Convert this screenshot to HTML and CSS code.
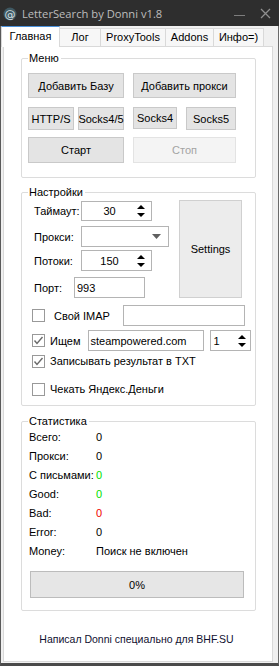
FILE: index.html
```html
<!DOCTYPE html>
<html lang="ru">
<head>
    <meta charset="UTF-8">
    <title>LetterSearch by Donni v1.8</title>
    <link rel="stylesheet" href="styles.css">
</head>
<body>
<div class="window">
    <!-- Заголовок окна -->
    <div class="titlebar">
        <svg class="app-icon" width="14" height="14" viewBox="0 0 14 14">
            <circle cx="7" cy="7" r="6.5" fill="#3f5862"/>
            <text x="7" y="10.5" text-anchor="middle" font-size="11" font-family="DejaVu Sans, sans-serif" fill="#d8e2e6">@</text>
        </svg>
        <span class="app-title">LetterSearch by Donni v1.8</span>
        <div class="win-buttons">
            <svg width="11" height="11" viewBox="0 0 11 11"><line x1="0" y1="7.5" x2="11" y2="7.5" stroke="#7d7d7d" stroke-width="1"/></svg>
            <svg width="11" height="11" viewBox="0 0 11 11"><path d="M1 1 L10 10 M10 1 L1 10" stroke="#8f8f8f" stroke-width="1.3"/></svg>
        </div>
    </div>

    <div class="client">
        <!-- Вкладки -->
        <div class="tabs">
            <div class="tab active" style="width:59px">Главная</div>
            <div class="tab" style="width:42px">Лог</div>
            <div class="tab" style="width:66px">ProxyTools</div>
            <div class="tab" style="width:49px">Addons</div>
            <div class="tab" style="width:51px">Инфо=)</div>
        </div>

        <div class="panel">
            <!-- Меню -->
            <div class="group group-menu">
                <div class="group-title">Меню</div>
                <div class="btn-row row-1">
                    <div class="btn btn-wide">Добавить Базу</div>
                    <div class="btn btn-wider">Добавить прокси</div>
                </div>
                <div class="btn-row row-2">
                    <div class="btn btn-http">HTTP/S</div>
                    <div class="btn btn-s45">Socks4/5</div>
                    <div class="btn btn-s4">Socks4</div>
                    <div class="btn btn-s5">Socks5</div>
                </div>
                <div class="btn-row row-3">
                    <div class="btn btn-wide">Старт</div>
                    <div class="btn btn-wider disabled">Стоп</div>
                </div>
            </div>

            <!-- Настройки -->
            <div class="group group-settings">
                <div class="group-title">Настройки</div>
                <div class="settings-top">
                    <div class="settings-fields">
                        <div class="field-row fr-timeout">
                            <span class="field-label">Таймаут:</span>
                            <div class="spin">
                                <span class="spin-value">30</span>
                                <svg class="spin-arrows" width="8" height="14" viewBox="0 0 8 14"><polygon points="0,5 4,1 8,5" fill="#000"/><polygon points="0,9 8,9 4,13" fill="#000"/></svg>
                            </div>
                        </div>
                        <div class="field-row fr-proxy">
                            <span class="field-label">Прокси:</span>
                            <div class="combo">
                                <svg width="9" height="5" viewBox="0 0 9 5"><polygon points="0,0 9,0 4.5,5" fill="#606060"/></svg>
                            </div>
                        </div>
                        <div class="field-row fr-threads">
                            <span class="field-label">Потоки:</span>
                            <div class="spin">
                                <span class="spin-value">150</span>
                                <svg class="spin-arrows" width="8" height="14" viewBox="0 0 8 14"><polygon points="0,5 4,1 8,5" fill="#000"/><polygon points="0,9 8,9 4,13" fill="#000"/></svg>
                            </div>
                        </div>
                        <div class="field-row fr-port">
                            <span class="field-label port-label">Порт:</span>
                            <div class="textbox port-box">993</div>
                        </div>
                    </div>
                    <div class="btn btn-settings">Settings</div>
                </div>

                <div class="check-row cr-imap">
                    <span class="checkbox"></span>
                    <span class="check-label imap-label">Свой IMAP</span>
                    <div class="textbox imap-box"></div>
                </div>
                <div class="check-row cr-search">
                    <span class="checkbox checked">
                        <svg width="11" height="11" viewBox="0 0 11 11"><polyline points="1.5,5.5 4,8.5 9.5,2" fill="none" stroke="#6a6a6a" stroke-width="1.4"/></svg>
                    </span>
                    <span class="check-label">Ищем</span>
                    <div class="textbox search-box">steampowered.com</div>
                    <div class="spin spin-small">
                        <span class="spin-value left">1</span>
                        <svg class="spin-arrows" width="8" height="14" viewBox="0 0 8 14"><polygon points="0,5 4,1 8,5" fill="#000"/><polygon points="0,9 8,9 4,13" fill="#000"/></svg>
                    </div>
                </div>
                <div class="check-row cr-txt">
                    <span class="checkbox checked">
                        <svg width="11" height="11" viewBox="0 0 11 11"><polyline points="1.5,5.5 4,8.5 9.5,2" fill="none" stroke="#6a6a6a" stroke-width="1.4"/></svg>
                    </span>
                    <span class="check-label">Записывать результат в TXT</span>
                </div>
                <div class="check-row cr-yandex">
                    <span class="checkbox"></span>
                    <span class="check-label">Чекать Яндекс.Деньги</span>
                </div>
            </div>

            <!-- Статистика -->
            <div class="group group-stats">
                <div class="group-title">Статистика</div>
                <div class="stat-row"><span class="stat-label">Всего:</span><span>0</span></div>
                <div class="stat-row"><span class="stat-label">Прокси:</span><span>0</span></div>
                <div class="stat-row"><span class="stat-label">С письмами:</span><span class="green">0</span></div>
                <div class="stat-row"><span class="stat-label">Good:</span><span class="green">0</span></div>
                <div class="stat-row"><span class="stat-label">Bad:</span><span class="red">0</span></div>
                <div class="stat-row"><span class="stat-label">Error:</span><span>0</span></div>
                <div class="stat-row"><span class="stat-label">Money:</span><span>Поиск не включен</span></div>
                <div class="progress">0%</div>
            </div>

            <div class="footer">Написал Donni специально для BHF.SU</div>
        </div>
    </div>
</div>
</body>
</html>
```

FILE: styles.css
```css
body {
    margin: 0;
    font-family: "Liberation Sans", Arial, sans-serif;
    font-size: 11px;
    color: #000;
}

.window {
    width: 279px;
    height: 666px;
    background-color: #f0f0f0;
    display: flex;
    flex-direction: column;
    overflow: hidden;
}

/* Заголовок */
.titlebar {
    height: 26px;
    flex-shrink: 0;
    background-color: #2e2e2e;
    display: flex;
    align-items: center;
    padding-left: 3px;
}

.app-icon {
    margin-top: 1px;
}

.app-title {
    margin-left: 5px;
    font-family: "Open Sans", "Noto Sans", sans-serif;
    font-size: 11.2px;
    color: #bdbdbd;
}

.win-buttons {
    margin-left: auto;
    display: flex;
    gap: 15px;
    padding-right: 8px;
    margin-top: 1px;
}

/* Клиентская область */
.client {
    flex: 1;
    border-left: 1px solid #5a5a5a;
    border-right: 1px solid #6a6a6a;
    border-bottom: 3px solid #4a4a4a;
}

.tabs {
    height: 20px;
    display: flex;
    align-items: flex-end;
}

.tab {
    box-sizing: border-box;
    height: 18px;
    line-height: 16px;
    text-align: center;
    background-color: #f7f7f7;
    border: 1px solid #d9d9d9;
    border-bottom: none;
    margin-left: -1px;
}

.tab.active {
    margin-left: 0;
    height: 21px;
    line-height: 19px;
    align-self: flex-start;
    margin-bottom: -1px;
    background-color: #fff;
    border-top-color: #4a90d9;
    position: relative;
    z-index: 1;
}

.panel {
    box-sizing: border-box;
    margin-left: 2px;
    width: 270px;
    height: 616px;
    background-color: #fff;
    border: 1px solid #d9d9d9;
    padding-top: 11px;
    padding-left: 17px;
}

/* Групбоксы */
.group {
    box-sizing: border-box;
    width: 235px;
    border: 1px solid #dcdcdc;
    border-radius: 2px;
}

.group-title {
    width: fit-content;
    height: 14px;
    line-height: 14px;
    margin: -8px 0 0 6px;
    padding: 0 2px 0 1px;
    background-color: #fff;
}

/* Кнопки */
.btn {
    box-sizing: border-box;
    background-color: #e4e4e4;
    border: 1px solid #c9c9c9;
    display: flex;
    align-items: center;
    justify-content: center;
}

.btn.disabled {
    background-color: #f4f4f4;
    border-color: #e3e3e3;
    color: #a3a3a3;
}

.group-menu {
    padding-bottom: 14px;
}

.btn-row {
    display: flex;
    align-items: flex-start;
    margin-left: 6px;
}

.row-1 { margin-top: 8px; height: 25px; gap: 9px; }
.row-2 { margin-top: 9px; height: 23px; }
.row-3 { margin-top: 7px; height: 26px; gap: 9px; }

.row-1 .btn, .row-3 .btn { height: 100%; }
.btn-wide { width: 96px; }
.btn-wider { width: 103px; }

.row-2 .btn { height: 23px; }
.btn-http { width: 46px; }
.btn-s45 { width: 46px; margin-left: 4px; }
.row-2 .btn-s4 { width: 44px; height: 22px; margin-left: 9px; }
.btn-s5 { width: 50px; margin-left: 9px; }

/* Настройки */
.group-settings {
    margin-top: 14px;
    padding-bottom: 9px;
}

.settings-top {
    display: flex;
    align-items: flex-start;
}

.settings-fields {
    width: 157px;
    padding-left: 12px;
    box-sizing: border-box;
}

.field-row {
    display: flex;
    align-items: center;
    height: 20px;
}

.fr-timeout { margin-top: 2px; }
.fr-proxy { margin-top: 5px; height: 21px; }
.fr-threads { margin-top: 3px; height: 21px; }
.fr-port { margin-top: 6px; height: 21px; }

.field-label {
    width: 47px;
}

.port-label {
    width: 40px;
}

.spin, .combo, .textbox {
    box-sizing: border-box;
    height: 100%;
    border: 1px solid #b4b4b4;
    background-color: #fff;
    display: flex;
    align-items: center;
}

.spin {
    width: 71px;
}

.spin-value {
    flex: 1;
    text-align: center;
}

.spin-value.left {
    text-align: left;
    padding-left: 3px;
}

.spin-arrows {
    margin-right: 6px;
}

.combo {
    width: 88px;
    justify-content: flex-end;
    padding-right: 7px;
}

.textbox {
    padding-left: 2px;
}

.port-box {
    width: 71px;
}

.btn-settings {
    width: 63px;
    height: 98px;
    margin-top: 1px;
    background-color: #ececec;
    border-color: #d0d0d0;
}

.check-row {
    display: flex;
    align-items: center;
    padding-left: 10px;
    height: 14px;
}

.checkbox {
    box-sizing: border-box;
    width: 13px;
    height: 13px;
    border: 1px solid #999;
    background-color: #fff;
    display: flex;
    align-items: center;
    justify-content: center;
    flex-shrink: 0;
}

.check-label {
    margin-left: 5px;
    white-space: nowrap;
}

.imap-label {
    margin-left: 9px;
    width: 69px;
}

.cr-imap { margin-top: 7px; height: 21px; }
.cr-search { margin-top: 4px; height: 21px; }
.cr-txt { margin-top: 3px; }
.cr-yandex { margin-top: 14px; }

.imap-box {
    width: 122px;
}

.search-box {
    width: 116px;
    margin-left: 7px;
}

.spin-small {
    width: 41px;
    margin-left: 6px;
}

.spin-small .spin-arrows {
    margin-right: 4px;
}

/* Статистика */
.group-stats {
    margin-top: 15px;
    padding-bottom: 12px;
}

.stat-row {
    display: flex;
    height: 19px;
    line-height: 19px;
    padding-left: 7px;
    white-space: nowrap;
}

.stat-label {
    width: 67px;
}

.green { color: #00e000; }
.red { color: #f00000; }

.progress {
    box-sizing: border-box;
    width: 214px;
    height: 27px;
    margin: 10px 0 0 8px;
    background-color: #e6e6e6;
    border: 1px solid #bcbcbc;
    display: flex;
    align-items: center;
    justify-content: center;
}

.footer {
    width: 235px;
    margin-top: 21px;
    line-height: 14px;
    text-align: center;
    padding-right: 4px;
    box-sizing: border-box;
    font-size: 10.5px;
    color: #101030;
}
```
